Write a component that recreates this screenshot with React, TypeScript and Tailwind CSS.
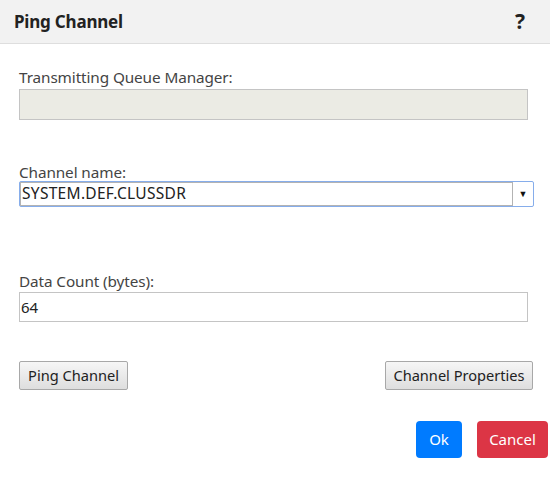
import React from 'react';

const font = { fontFamily: '"Noto Sans", "Open Sans", Arial, sans-serif' };

export default function App() {
  return (
    <div className="w-[550px] h-[485px] bg-white text-[#333] overflow-hidden" style={font}>
      {/* Header */}
      <header className="h-[44px] bg-[#f2f2f2] border-b border-[#dedede] flex items-center justify-between pl-[14px] pr-[25px]">
        <h1 className="text-[17px] font-bold text-[#222] tracking-[-0.2px]">Ping Channel</h1>
        <span className="text-[21px] font-bold text-[#222] leading-none">?</span>
      </header>

      <main className="pl-[19px] pr-[22px]">
        {/* Transmitting queue manager */}
        <label className="block mt-[22px] text-[15.3px] leading-[22px] text-[#444] tracking-[-0.1px]">Transmitting Queue Manager:</label>
        <div className="mt-[1px] h-[31px] w-[509px] bg-[#ebebe4] border border-[#c4c4c4]" />

        {/* Channel name */}
        <label className="block mt-[41px] text-[15.3px] leading-[22px] text-[#444] tracking-[-0.1px]">Channel name:</label>
        <div className="-mt-[2px] h-[26px] w-[515px] flex border border-[#86adeb] rounded-[2px]">
          <div className="flex-1 border border-[#b3b3b3] bg-white flex items-center pl-[1px] text-[15.5px] text-[#222] tracking-[0.3px]">
            SYSTEM.DEF.CLUSSDR
          </div>
          <div className="w-[20px] flex items-center justify-center text-[9px] text-[#111]">▼</div>
        </div>

        {/* Data count */}
        <label className="block mt-[63px] text-[15.3px] leading-[22px] text-[#444] tracking-[-0.1px]">Data Count (bytes):</label>
        <div className="mt-[0px] h-[30px] w-[509px] bg-white border border-[#c4c4c4] flex items-center pl-[1px] text-[15px] text-[#222]">
          64
        </div>

        {/* Action buttons */}
        <div className="mt-[39px] flex justify-between w-[514px]">
          <button className="h-[29px] w-[109px] border border-[#a8a8a8] rounded-[2px] bg-gradient-to-b from-[#f6f6f6] to-[#dedede] text-[14.6px] text-[#222]">
            Ping Channel
          </button>
          <button className="h-[29px] w-[148px] border border-[#a8a8a8] rounded-[2px] bg-gradient-to-b from-[#f6f6f6] to-[#dedede] text-[14.6px] text-[#222]">
            Channel Properties
          </button>
        </div>

        {/* Dialog buttons */}
        <div className="mt-[31px] flex justify-end gap-[15px] -mr-[20px]">
          <button className="h-[37px] w-[46px] rounded-[4px] bg-[#007bff] text-white text-[15px]">Ok</button>
          <button className="h-[37px] w-[71px] rounded-[4px] bg-[#dc3545] text-white text-[15px]">Cancel</button>
        </div>
      </main>
    </div>
  );
}
